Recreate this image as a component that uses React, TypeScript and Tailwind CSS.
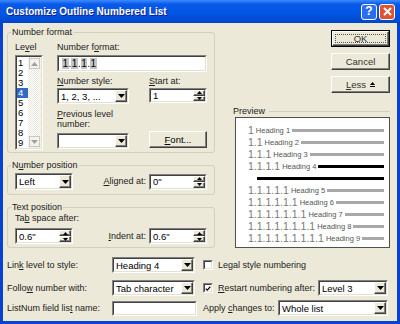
const raised =
  "border border-t-white border-l-white border-r-[#404040] border-b-[#404040] shadow-[inset_-1px_-1px_0_#808080] bg-[#ece9d8]";

function U({ children }: { children: React.ReactNode }) {
  return <span className="underline underline-offset-[1px]">{children}</span>;
}

function Down({ color = "#000" }: { color?: string }) {
  return (
    <svg width="7" height="4" viewBox="0 0 7 4">
      <path d="M0 0h7L3.5 4z" fill={color} />
    </svg>
  );
}

function Up({ color = "#000" }: { color?: string }) {
  return (
    <svg width="7" height="4" viewBox="0 0 7 4">
      <path d="M0 4h7L3.5 0z" fill={color} />
    </svg>
  );
}

function Sunken({ className, children }: { className: string; children?: React.ReactNode }) {
  return (
    <div className={`border border-t-[#808080] border-l-[#808080] border-r-white border-b-white ${className}`}>
      <div className="w-full h-full flex bg-white border border-t-[#404040] border-l-[#404040] border-r-[#e4e1d4] border-b-[#e4e1d4]">
        {children}
      </div>
    </div>
  );
}

function Combo({ className, text }: { className: string; text?: string }) {
  return (
    <Sunken className={className}>
      <span className="flex-1 pl-[2px] text-[9.5px] text-black flex items-center">{text}</span>
      <span className={`w-[12px] flex items-center justify-center ${raised}`}>
        <Down />
      </span>
    </Sunken>
  );
}

function Spin({ className, text }: { className: string; text: string }) {
  return (
    <Sunken className={className}>
      <span className="flex-1 pl-[2px] text-[9.5px] text-black flex items-center">{text}</span>
      <span className="w-[12px] flex flex-col">
        <span className={`flex-1 flex items-center justify-center ${raised}`}>
          <svg width="5" height="3" viewBox="0 0 5 3"><path d="M0 3h5L2.5 0z" fill="#000" /></svg>
        </span>
        <span className={`flex-1 flex items-center justify-center ${raised}`}>
          <svg width="5" height="3" viewBox="0 0 5 3"><path d="M0 0h5L2.5 3z" fill="#000" /></svg>
        </span>
      </span>
    </Sunken>
  );
}

function Check({ checked }: { checked?: boolean }) {
  return (
    <Sunken className="w-[10px] h-[10px]">
      {checked && (
        <svg width="8" height="8" viewBox="0 0 8 8">
          <path d="M1 3.5l2 2 4-4.5" stroke="#000" strokeWidth="1.6" fill="none" />
        </svg>
      )}
    </Sunken>
  );
}

function PreviewRow({ n }: { n: number }) {
  const num = Array(n).fill("1").join(".");
  return (
    <div className="flex items-center h-[12px]">
      <span className="text-[10.5px] leading-[12px] text-[#777]">{num}</span>
      <span className="text-[7.5px] leading-[8px] text-[#555] ml-[2px] mt-[2px]">Heading {n}</span>
      <span className={`flex-1 ml-[2px] mt-[1px] ${n === 4 ? "h-[3px] bg-black" : "h-[3px] bg-[#a8a8a8]"}`} />
    </div>
  );
}

export default function App() {
  const levels = [1, 2, 3, 4, 5, 6, 7, 8, 9];
  return (
    <div className="w-[400px] h-[324px] bg-[#0842d4] flex flex-col font-['Liberation_Sans',Arial,sans-serif] text-[9px] text-[#222] leading-[11px]">
      {/* title bar */}
      <div className="h-[23px] flex items-center pl-[6px] pr-[5px] bg-[linear-gradient(to_bottom,#3d8bff_0%,#0a5ae8_18%,#0055e5_60%,#0046c8_100%)]">
        <span className="flex-1 text-white font-bold text-[10px] [text-shadow:1px_1px_0_#0f1f8a]">
          Customize Outline Numbered List
        </span>
        <span className="w-[16px] h-[16px] rounded-[3px] border border-white bg-[#2c6cf0] flex items-center justify-center text-white font-bold text-[12px]">
          ?
        </span>
        <span className="w-[16px] h-[16px] ml-[2px] rounded-[3px] border border-white bg-[#e0532f] flex items-center justify-center">
          <svg width="9" height="9" viewBox="0 0 9 9">
            <path d="M1 1l7 7M8 1L1 8" stroke="#fff" strokeWidth="2" />
          </svg>
        </span>
      </div>

      {/* body */}
      <div className="flex-1 mx-[3px] mb-[3px] bg-[#ece9d8] flex flex-col">
        <div className="flex">
          {/* left column */}
          <div className="ml-[4px] w-[208px] flex flex-col">
            <fieldset className="mt-[4px] h-[126px] border border-[#d0d0bf] rounded-[3px]">
              <legend className="ml-[3px] px-[1px]">Number format</legend>
              <div className="flex pl-[7px] pr-[7px]">
                <div className="flex flex-col mt-[4px]">
                  <span>Le<U>v</U>el</span>
                  <Sunken className="mt-[2px] w-[28px] h-[95px]">
                    <div className="w-[11px] flex flex-col pt-[1px] text-[9.5px] text-black">
                      {levels.map((l) => (
                        <span
                          key={l}
                          className={`h-[10px] leading-[10px] pl-[1px] ${l === 4 ? "bg-[#316ac5] text-white" : ""}`}
                        >
                          {l}
                        </span>
                      ))}
                    </div>
                    <div className="flex-1 flex flex-col justify-between p-[1px] bg-[repeating-conic-gradient(#e9e7dc_0%_25%,#ffffff_0%_50%)] bg-[length:2px_2px]">
                      <span className="h-[11px] flex items-center justify-center border border-[#c9c7ba] bg-[#f3f2ec]">
                        <Up color="#a0a0a0" />
                      </span>
                      <span className="h-[11px] flex items-center justify-center border border-[#c9c7ba] bg-[#f3f2ec]">
                        <Down color="#a0a0a0" />
                      </span>
                    </div>
                  </Sunken>
                </div>

                <div className="ml-[14px] flex flex-col mt-[4px] w-[150px]">
                  <span>Number f<U>o</U>rmat:</span>
                  <Sunken className="mt-[2px] w-[150px] h-[17px]">
                    <span className="pl-[3px] flex items-center text-[10px] text-black">
                      <span className="bg-[#c4c4c4] px-[0.5px]">1</span>.
                      <span className="bg-[#c4c4c4] px-[0.5px]">1</span>.
                      <span className="bg-[#c4c4c4] px-[0.5px]">1</span>.
                      <span className="bg-[#c4c4c4] px-[0.5px]">1</span>
                    </span>
                  </Sunken>
                  <div className="flex mt-[4px]">
                    <div className="w-[72px] flex flex-col">
                      <span><U>N</U>umber style:</span>
                      <Combo className="mt-[1px] w-[72px] h-[16px]" text="1, 2, 3, ..." />
                    </div>
                    <div className="ml-[20px] w-[58px] flex flex-col">
                      <span><U>S</U>tart at:</span>
                      <Spin className="mt-[1px] w-[58px] h-[15px]" text="1" />
                    </div>
                  </div>
                  <div className="flex items-end mt-[5px]">
                    <div className="w-[72px] flex flex-col">
                      <span className="leading-[10px]"><U>P</U>revious level<br />number:</span>
                      <Combo className="mt-[4px] w-[72px] h-[16px]" />
                    </div>
                    <button className={`ml-[20px] w-[58px] h-[17px] text-[9.5px] text-black mb-[1px] ${raised}`}>
                      <U>F</U>ont...
                    </button>
                  </div>
                </div>
              </div>
            </fieldset>

            <fieldset className="mt-[7px] h-[35px] border border-[#d0d0bf] rounded-[3px]">
              <legend className="ml-[3px] px-[1px]">N<U>u</U>mber position</legend>
              <div className="flex items-center pl-[7px] pr-[7px] mt-[2px]">
                <Combo className="w-[58px] h-[17px]" text="Left" />
                <span className="flex-1 text-right pr-[3px]"><U>A</U>ligned at:</span>
                <Spin className="w-[58px] h-[16px]" text={'0"'} />
              </div>
            </fieldset>

            <fieldset className="mt-[7px] h-[46px] border border-[#d0d0bf] rounded-[3px]">
              <legend className="ml-[3px] px-[1px]">Text position</legend>
              <div className="pl-[7px] pr-[7px] flex flex-col">
                <span>Ta<U>b</U> space after:</span>
                <div className="flex items-center mt-[4px]">
                  <Spin className="w-[58px] h-[16px]" text={'0.6"'} />
                  <span className="flex-1 text-right pr-[3px]"><U>I</U>ndent at:</span>
                  <Spin className="w-[58px] h-[16px]" text={'0.6"'} />
                </div>
              </div>
            </fieldset>
          </div>

          {/* right column */}
          <div className="flex-1 flex flex-col">
            <div className="self-end mr-[7px] mt-[7px] flex flex-col gap-[6px]">
              <button className="w-[59px] h-[17px] text-[9.5px] text-[#333] border border-black bg-[#ece9d8] flex">
                <span className={`flex-1 p-[2px] flex ${raised}`}>
                  <span className="flex-1 flex items-center justify-center border border-dotted border-[#555]">OK</span>
                </span>
              </button>
              <button className={`w-[59px] h-[17px] text-[9.5px] text-[#333] ${raised}`}>Cancel</button>
              <button className={`w-[59px] h-[17px] text-[9.5px] text-[#333] flex items-center justify-center gap-[4px] ${raised}`}>
                <span><U>L</U>ess</span>
                <svg width="5" height="6" viewBox="0 0 5 6">
                  <path d="M0 3h5L2.5 0z" fill="#000" />
                  <rect x="0" y="4" width="5" height="1" fill="#000" />
                </svg>
              </button>
            </div>
            <div className="mt-[13px] ml-[18px] mr-[7px] flex items-center">
              <span>Preview</span>
              <span className="flex-1 ml-[4px] border-t border-[#d0d0bf]" />
            </div>
            <div className="ml-[20px] mr-[7px] h-[131px] bg-white border border-[#505050] pt-[6px] pl-[12px] pr-[5px] flex flex-col">
              {levels.slice(0, 4).map((n) => (
                <PreviewRow key={n} n={n} />
              ))}
              <div className="h-[12px] flex items-center pl-[9px]">
                <span className="flex-1 h-[3px] bg-black" />
              </div>
              {levels.slice(4).map((n) => (
                <PreviewRow key={n} n={n} />
              ))}
            </div>
          </div>
        </div>

        {/* bottom rows */}
        <div className="mt-[9px] flex flex-col pl-[4px] pr-[9px]">
          <div className="flex items-center h-[16px]">
            <span className="w-[105px]">Lin<U>k</U> level to style:</span>
            <Combo className="w-[83px] h-[16px]" text="Heading 4" />
            <span className="ml-[8px]"><Check /></span>
            <span className="ml-[5px]">Le<U>g</U>al style numbering</span>
          </div>
          <div className="flex items-center h-[16px] mt-[7px]">
            <span className="w-[105px]">Follo<U>w</U> number with:</span>
            <Combo className="w-[83px] h-[16px]" text="Tab character" />
            <span className="ml-[8px]"><Check checked /></span>
            <span className="ml-[5px]"><U>R</U>estart numbering after:</span>
            <Combo className="ml-auto w-[70px] h-[16px]" text="Level 3" />
          </div>
          <div className="flex items-center h-[16px] mt-[4px]">
            <span className="w-[105px]">ListNum field lis<U>t</U> name:</span>
            <Sunken className="w-[85px] h-[15px]" />
            <span className="ml-[6px]">Apply <U>c</U>hanges to:</span>
            <Combo className="ml-auto w-[110px] h-[16px]" text="Whole list" />
          </div>
        </div>
      </div>
    </div>
  );
}
